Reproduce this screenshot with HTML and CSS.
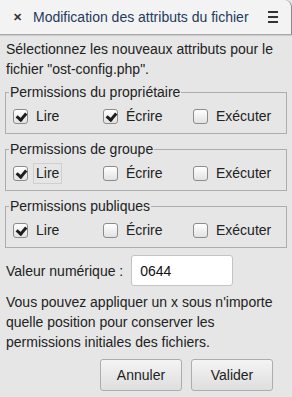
FILE: index.html
```html
<!DOCTYPE html>
<html>
<head>
    <title>Modification des attributs du fichier</title>
    <meta charset="UTF-8">
    <link rel="stylesheet" href="styles.css">
</head>
<body>
    <div class="titlebar">
        <span class="close">&#x2715;</span>
        <span class="title">Modification des attributs du fichier</span>
        <span class="menu"><i></i><i></i><i></i></span>
    </div>

    <div class="content">
        <p class="intro">Sélectionnez les nouveaux attributs pour le fichier "ost-config.php".</p>

        <fieldset class="perms">
            <legend>Permissions du propriétaire</legend>
            <div class="row">
                <label class="opt"><span class="box on"></span><span class="txt">Lire</span></label>
                <label class="opt"><span class="box on"></span><span class="txt">Écrire</span></label>
                <label class="opt"><span class="box"></span><span class="txt">Exécuter</span></label>
            </div>
        </fieldset>

        <fieldset class="perms">
            <legend>Permissions de groupe</legend>
            <div class="row">
                <label class="opt"><span class="box on"></span><span class="txt focus">Lire</span></label>
                <label class="opt"><span class="box"></span><span class="txt">Écrire</span></label>
                <label class="opt"><span class="box"></span><span class="txt">Exécuter</span></label>
            </div>
        </fieldset>

        <fieldset class="perms">
            <legend>Permissions publiques</legend>
            <div class="row">
                <label class="opt"><span class="box on"></span><span class="txt">Lire</span></label>
                <label class="opt"><span class="box"></span><span class="txt">Écrire</span></label>
                <label class="opt"><span class="box"></span><span class="txt">Exécuter</span></label>
            </div>
        </fieldset>

        <div class="numeric">
            <span>Valeur numérique :</span>
            <input class="value" type="text" value="0644">
        </div>

        <p class="hint">Vous pouvez appliquer un x sous n'importe quelle position pour conserver les permissions initiales des fichiers.</p>

        <div class="actions">
            <button class="btn">Annuler</button>
            <button class="btn">Valider</button>
        </div>
    </div>
</body>
</html>
```

FILE: styles.css
```css
html { margin: 0; padding: 0; border: 0; background: #fff; }
body { margin: 0; width: 292px; height: 397px; font-family: 'Liberation Sans', Arial, sans-serif; font-size: 14px; color: #222; background-color: #e6e6e6; overflow: hidden; }

.titlebar { display: flex; align-items: center; height: 35px; box-sizing: border-box; background: #f3f3f3; border-bottom: 1px solid #a9a9a9; box-shadow: 0 1px 1px rgba(0,0,0,0.12); border-top-right-radius: 7px; border-right: 1px solid #8a8a8a; }
.close { width: 33px; text-align: center; padding-left: 2px; box-sizing: border-box; font-size: 11px; font-weight: bold; color: #333; }
.title { flex: 1; min-width: 0; font-size: 14px; color: #233b5c; white-space: nowrap; }
.menu { display: flex; flex-direction: column; gap: 3px; width: 10px; margin-right: 13px; }
.menu i { display: block; height: 2px; background: #333; }

.content { padding: 0 5px; }
.intro { margin: 4px 0 0; line-height: 20px; padding-left: 1px; }

.perms { margin: 6px 0 0; padding: 0 7px 6px; border: 1px solid #adadad; }
.intro + .perms { margin-top: 4px; }
.perms legend { padding: 0 1px; margin-left: -4px; line-height: 18px; }
.row { display: grid; grid-template-columns: 90px 90px 1fr; margin-top: 5px; }
.opt { display: flex; align-items: center; gap: 5px; height: 21px; }
.box { width: 15px; height: 15px; border: 1px solid #8c8c8c; border-radius: 3px; box-sizing: border-box; background: linear-gradient(#ffffff, #e2e2e2); position: relative; }
.box.on::after { content: ""; position: absolute; left: 4px; top: 1px; width: 4px; height: 7px; border: solid #1e1e1e; border-width: 0 3px 3px 0; transform: rotate(40deg); }
.txt { padding: 0 2px; line-height: 19px; border: 1px solid transparent; }
.txt.focus { border-color: #cfcfcf; }

.numeric { display: flex; align-items: center; gap: 8px; margin-top: 7px; padding-left: 1px; }
.value { width: 102px; height: 31px; box-sizing: border-box; border: 1px solid #c3c3c3; border-radius: 3px; background: #fff; font-family: inherit; font-size: 14px; color: #111; padding: 0 8px; outline: none; }

.hint { margin: 6px 0 0; line-height: 20px; padding-left: 1px; }

.actions { display: flex; justify-content: flex-end; gap: 9px; margin-top: 7px; padding-right: 14px; }
.btn { width: 82px; height: 32px; font-family: inherit; font-size: 14px; color: #222; border: 1px solid #adadad; border-radius: 3px; background: linear-gradient(#f4f4f4, #dedede); padding: 0; }
```
